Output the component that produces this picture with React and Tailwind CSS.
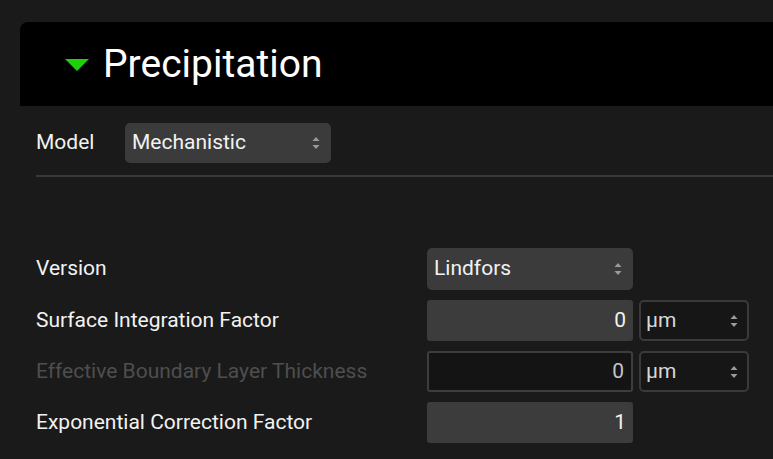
import React from 'react';

const font = { fontFamily: 'Roboto, "Liberation Sans", sans-serif' };

function Updown() {
    return (
        <svg width="8" height="14" viewBox="0 0 8 14" className="shrink-0">
            <path d="M4 1 L7.5 5 L0.5 5 Z" fill="#9a9a9a" />
            <path d="M4 13 L7.5 9 L0.5 9 Z" fill="#9a9a9a" />
        </svg>
    );
}

function Select({ value, className = '' }) {
    return (
        <div className={`flex items-center justify-between bg-[#3b3b3b] rounded-[5px] pl-[7px] pr-[11px] text-[21px] text-[#f2f2f2] ${className}`}>
            <span>{value}</span>
            <Updown />
        </div>
    );
}

function NumberField({ value, disabled }) {
    return (
        <div className={`w-[206px] h-[41px] rounded-[3px] flex items-center justify-end pr-[7px] text-[21px] ${disabled ? 'border-2 border-[#3d3d3d] bg-[#141414] text-[#c4c4c4]' : 'bg-[#3c3c3c] text-[#f2f2f2]'}`}>
            {value}
        </div>
    );
}

function UnitSelect() {
    return (
        <div className="w-[110px] h-[41px] ml-[6px] rounded-[5px] border-2 border-[#3a3a3a] bg-[#161616] flex items-center justify-between pl-[5px] pr-[9px] text-[21px] text-[#d8d8d8]">
            <span>µm</span>
            <Updown />
        </div>
    );
}

function Row({ label, disabled, children, tall }) {
    return (
        <div className={`flex items-center ${tall ? 'h-[42px]' : 'h-[41px]'}`}>
            <div className={`w-[391px] text-[21px] ${disabled ? 'text-[#4e4e4e]' : 'text-[#f2f2f2]'}`}>{label}</div>
            {children}
        </div>
    );
}

export default function App() {
    return (
        <div style={font} className="w-full h-[459px] bg-[#1a1a1a] overflow-hidden pt-[22px] pl-[20px]">
            {/* Section header */}
            <div className="h-[84px] bg-black rounded-tl-[8px] flex items-center pl-[45px]">
                <svg width="24" height="12" viewBox="0 0 24 12" className="mr-[14px] mt-[2px]">
                    <path d="M0 0 L24 0 L12 12 Z" fill="#1fd10a" />
                </svg>
                <span className="text-[39px] text-white leading-none">Precipitation</span>
            </div>

            <div className="pl-[16px]">
                {/* Model */}
                <div className="flex items-center mt-[17px] h-[40px]">
                    <div className="w-[89px] text-[21px] text-[#f2f2f2]">Model</div>
                    <Select value="Mechanistic" className="w-[206px] h-[40px]" />
                </div>
                <div className="h-[2px] bg-[#3a3a3a] mt-[12px]" />

                {/* Parameters */}
                <div className="mt-[71px] flex flex-col gap-[10px]">
                    <Row label="Version" tall>
                        <Select value="Lindfors" className="w-[206px] h-[42px]" />
                    </Row>
                    <Row label="Surface Integration Factor">
                        <NumberField value="0" />
                        <UnitSelect />
                    </Row>
                    <Row label="Effective Boundary Layer Thickness" disabled>
                        <NumberField value="0" disabled />
                        <UnitSelect />
                    </Row>
                    <Row label="Exponential Correction Factor">
                        <NumberField value="1" />
                    </Row>
                </div>
            </div>
        </div>
    );
}
